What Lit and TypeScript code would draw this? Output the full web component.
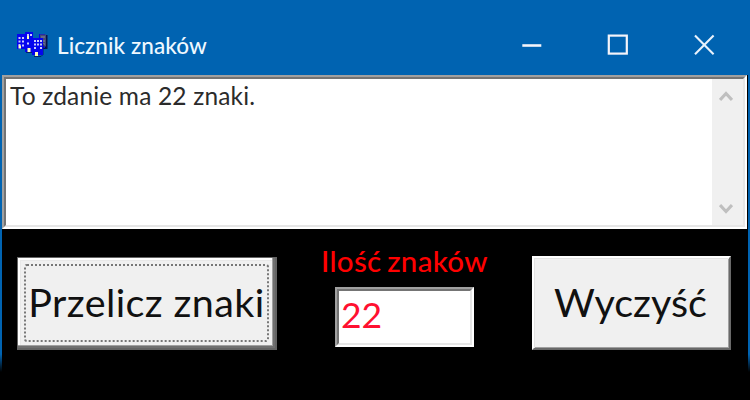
import { LitElement, html, css, svg } from "lit";
import { customElement, property } from "lit/decorators.js";

type Block = [number, number, number, number];

const towers: Block[] = [[0, 2, 9, 15], [8, 0, 8, 20], [15, 6, 11, 17], [22, 2, 6, 14]];
const windowsLit: Block[] = [
  [1.5, 5, 2, 2], [5, 5, 2, 2], [1.5, 8.5, 2, 2], [5, 8.5, 2, 2], [5, 12.5, 2, 2], [1.5, 12, 2, 2],
  [10, 2, 2, 2], [13, 2, 2, 2], [10, 10.5, 2, 2],
  [17, 8, 2, 2], [20, 8, 2, 2], [23, 8, 2, 2],
  [17, 11.5, 2, 2], [20, 11.5, 2, 2], [23, 11.5, 2, 2], [17, 15, 2, 2], [23, 15, 2, 2],
];
const doors: Block[] = [[1.5, 13.5, 2.5, 3], [10, 4, 2, 3], [10.5, 16, 3, 4], [18, 20, 3, 4]];
const rects = (list: Block[], fill: string) =>
  list.map(([x, y, w, h]) => svg`<rect x=${x} y=${y} width=${w} height=${h} fill=${fill}></rect>`);

@customElement("title-bar")
export class TitleBar extends LitElement {
  @property() caption = "";

  static styles = css`
    :host { display: flex; align-items: center; height: 75px; box-sizing: border-box;
      padding: 14px 35px 0 17px; background: #0063b1; color: #fff; }
    svg { display: block; flex: none; }
    .caption { margin-left: 9px; font: 500 22.5px/30px Lato, sans-serif; letter-spacing: 0.08px; color: #eef8ff; white-space: nowrap; margin-top: 3px; }
    .controls { margin-left: auto; display: flex; gap: 64.5px; }
  `;

  render() {
    return html`
      <svg width="31" height="26" viewBox="0 0 31 26">
        <rect x="24" y="3" width="6.5" height="14" fill="#06134a"></rect>
        ${rects(towers, "#0505ee")}
        <rect x="23" y="2.5" width="6" height="12" fill="#454b75"></rect>
        <path d="M24 5h4M24 9h4M24 12h4" stroke="#8589a0"></path>
        <path d="M9 20.5h6M17 24.5h7l2-2V12" stroke="#03236a" fill="none"></path>
        <rect x="15" y="6" width="11" height="17" fill="#0505ee"></rect>
        ${rects(windowsLit, "#c9cbfa")} ${rects(doors, "#ffffb8")}
      </svg>
      <span class="caption">${this.caption}</span>
      <div class="controls">
        <svg width="22" height="22" viewBox="0 0 22 22"><path d="M2.3 11.5h19" stroke="#f4f4fa" stroke-width="2.6"></path></svg>
        <svg width="22" height="22" viewBox="0 0 22 22"><rect x="1.8" y="1.6" width="18" height="18" fill="none" stroke="#f4f4fa" stroke-width="2.2"></rect></svg>
        <svg width="22" height="22" viewBox="0 0 22 22"><path d="M2 1.6l18.6 18.6M20.6 1.6L2 20.2" stroke="#e8f2fc" stroke-width="2.1"></path></svg>
      </div>
    `;
  }
}

@customElement("app-root")
export class AppRoot extends LitElement {
  static styles = css`
    :host { display: block; width: 750px; height: 400px; overflow: hidden; background: #000; font-family: Lato, sans-serif; }
    * { box-sizing: border-box; }
    .frame { display: flex; height: 297px; }
    .edge { flex: none; background: linear-gradient(#0063b1 94%, #000); }
    .left { width: 2px; }
    .right { width: 3px; background: linear-gradient(90deg, #000 1px, transparent 1px), linear-gradient(#0063b1 94%, #000); }
    .client { flex: 1; min-width: 0; }
    .sunken { border: 2px solid; border-color: #a0a0a0 #fff #fff #a0a0a0; }
    .sunken > div { height: 100%; border: 2px solid; border-color: #747474 #e6e6e6 #e6e6e6 #747474; background: #fff; }
    .memo { height: 154px; }
    .memo > div { display: flex; }
    .text { flex: 1; padding: 0 0 0 4px; font-size: 24.5px; letter-spacing: 0.17px; line-height: 34px; color: #2b2b2b; white-space: nowrap; }
    .scroll { width: 31px; background: #f0f0f0; display: flex; flex-direction: column; justify-content: space-between; align-items: center; padding: 11px 3px 10px 0; }
    .scroll svg { display: block; }
    .panel { display: flex; align-items: flex-start; padding: 18px 0 0 15px; }
    button { font: 39.5px/50px Lato, sans-serif; color: #111; background: #f0f0f0; padding: 0; border-radius: 0; white-space: nowrap; display: flex; align-items: center; justify-content: center; }
    .count { width: 260px; height: 93px; margin-top: 10px; border: 1px solid #646464; border-right-width: 2px; border-bottom-width: 2px;
      box-shadow: inset -2px -2px #707070, inset -3px -3px #a0a0a0, inset 2px 2px #fff, inset 3px 3px #e8e8e8; }
    .focus { width: 245px; height: 78px; margin-right: 1px; padding: 0 0 2px 1px; display: flex; align-items: center; justify-content: center; border: 2px dotted #777; border-radius: 3px; letter-spacing: 0.4px; }
    .result { width: 170px; margin-left: 44px; }
    .label { height: 34px; font-weight: 500; font-size: 29.5px; word-spacing: -2px; letter-spacing: 0.3px; line-height: 28px; color: #f00; white-space: nowrap; }
    .field { width: 139px; height: 60px; margin: 6px 0 0 14px; }
    .value { padding-left: 2px; font-size: 35.5px; line-height: 47px; color: #ff1030; }
    .clear { width: 199px; height: 94px; margin: 9px 0 0 41px; padding: 0 2px 2px 0; border: 2px solid; border-color: #fff #696969 #696969 #fff;
      box-shadow: inset 1px 1px #e3e3e3, inset -1px -1px #a0a0a0; }
  `;

  render() {
    return html`
      <title-bar caption="Licznik znaków"></title-bar>
      <div class="frame">
        <div class="edge left"></div>
        <div class="client">
          <div class="memo sunken"><div>
            <div class="text"><span>To zdanie ma 22 znaki.</span></div>
            <div class="scroll">
              <svg width="14" height="12" viewBox="0 0 14 12"><path d="M1 10L7 3.5L13 10" fill="none" stroke="#bfbfbf" stroke-width="3.2"></path></svg>
              <svg width="14" height="12" viewBox="0 0 14 12"><path d="M1 2L7 8.5L13 2" fill="none" stroke="#bfbfbf" stroke-width="3.2"></path></svg>
            </div>
          </div></div>
          <div class="panel">
            <button class="count"><span class="focus"><span>Przelicz znaki</span></span></button>
            <div class="result">
              <div class="label"><span>Ilość znaków</span></div>
              <div class="field sunken"><div class="value"><span>22</span></div></div>
            </div>
            <button class="clear"><span>Wyczyść</span></button>
          </div>
        </div>
        <div class="edge right"></div>
      </div>
    `;
  }
}
